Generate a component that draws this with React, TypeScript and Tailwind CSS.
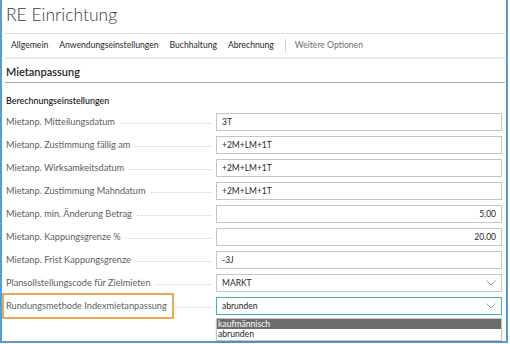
import React from 'react';

type Field = {
  label: string;
  value: string;
  align?: 'left' | 'right';
  select?: boolean;
  active?: boolean;
};

const fields: Field[] = [
  { label: 'Mietanp. Mitteilungsdatum', value: '3T' },
  { label: 'Mietanp. Zustimmung fällig am', value: '+2M+LM+1T' },
  { label: 'Mietanp. Wirksamkeitsdatum', value: '+2M+LM+1T' },
  { label: 'Mietanp. Zustimmung Mahndatum', value: '+2M+LM+1T' },
  { label: 'Mietanp. min. Änderung Betrag', value: '5.00', align: 'right' },
  { label: 'Mietanp. Kappungsgrenze %', value: '20.00', align: 'right' },
  { label: 'Mietanp. Frist Kappungsgrenze', value: '-3J' },
  { label: 'Plansollstellungscode für Zielmieten', value: 'MARKT', select: true },
  { label: 'Rundungsmethode Indexmietanpassung', value: 'abrunden', select: true, active: true },
];

const tabs = ['Allgemein', 'Anwendungseinstellungen', 'Buchhaltung', 'Abrechnung'];

const Chevron = () => (
  <svg width="10" height="6" viewBox="0 0 10 6" className="shrink-0">
    <path d="M0.5 0.5 L5 5 L9.5 0.5" fill="none" stroke="#9a9a9a" strokeWidth="1" />
  </svg>
);

const FieldRow: React.FC<{ field: Field }> = ({ field }) => (
  <div className="relative flex h-[18px] items-center">
    {field.active && (
      <div className="absolute left-[-4px] top-[-4px] h-[26px] w-[172px] border-2 border-[#f4a84e]" />
    )}
    <div className="flex w-[210px] shrink-0 items-center pr-[5px]">
      <span className="whitespace-nowrap text-[9.2px] text-[#5e5e5e]">{field.label}</span>
      <span className="ml-[5px] mt-[3px] flex-1 border-b border-dotted border-[#cfcfcf]" />
    </div>
    <div
      className={`flex h-[18px] w-[286px] items-center border px-[5px] text-[8.5px] text-[#262626] ${
        field.active ? 'border-[#3fb6b2]' : 'border-[#c6c6c6]'
      } ${field.align === 'right' ? 'justify-end' : 'justify-between'}`}
    >
      <span>{field.value}</span>
      {field.select && <Chevron />}
    </div>
  </div>
);

export default function App() {
  return (
    <div className="h-[344px] w-[510px] bg-white font-['Lato','Liberation_Sans',sans-serif]">
      <div className="flex h-[343px] w-[508px] flex-col border-x-2 border-b-2 border-[#5b9bd5] pl-[3px] pr-[1px]">
        <div className="flex h-[34px] items-center border-b border-[#dedede] pl-[1px] pb-[3px] text-[17.5px] font-light text-[#3a3a3a]">
          RE Einrichtung
        </div>
        <div className="flex h-[25px] items-center border-b-2 border-[#ececec] pl-[6px] text-[8.6px] text-[#262626]">
          {tabs.map((t) => (
            <span key={t} className="mr-[11px]">
              {t}
            </span>
          ))}
          <span className="mr-[9px] h-[14px] w-px bg-[#d0d0d0]" />
          <span className="text-[#6e6e6e]">Weitere Optionen</span>
        </div>
        <div className="flex h-[24px] items-center border-b border-[#a8a8a8] pl-[1px] pt-[3px] text-[11px] font-semibold text-[#262626]">
          Mietanpassung
        </div>
        <div className="pl-[1px] pt-[12px]">
          <div className="mb-[6px] text-[8.9px] font-semibold leading-[12px] text-[#262626]">
            Berechnungseinstellungen
          </div>
          <div className="flex flex-col gap-[5px]">
            {fields.map((f) => (
              <FieldRow key={f.label} field={f} />
            ))}
          </div>
          <div className="ml-[210px] mt-[3px] w-[286px] border border-[#c6c6c6] bg-white text-[8.6px] shadow-[0_1px_2px_rgba(0,0,0,0.15)]">
            <div className="h-[10px] bg-[#6b6b6b] pl-[1px] leading-[10px] text-white">kaufmännisch</div>
            <div className="h-[11px] pl-[1px] leading-[11px] text-[#262626]">abrunden</div>
          </div>
        </div>
      </div>
    </div>
  );
}
